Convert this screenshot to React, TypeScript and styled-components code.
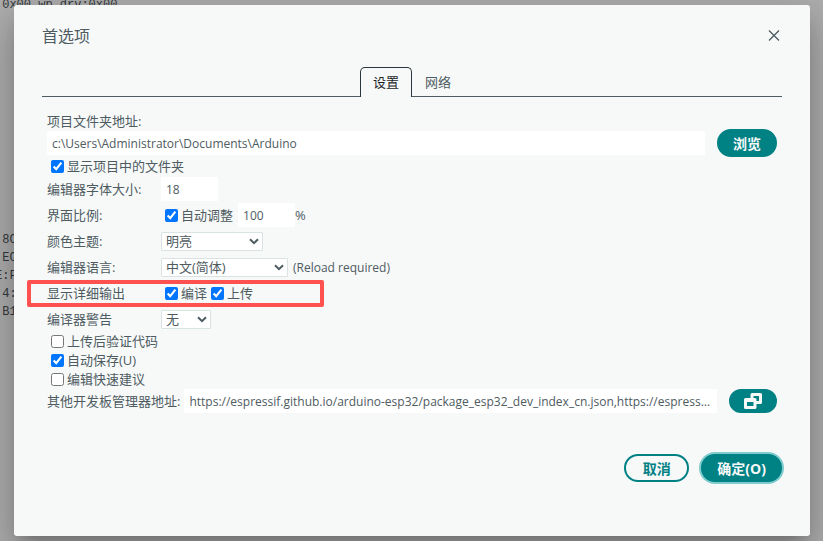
import React, { useState } from "react";
import styled, { createGlobalStyle } from "styled-components";

const teal = "#008184";
const ink = "#4e5b61";

const GlobalStyle = createGlobalStyle`
  *, *::before, *::after { box-sizing: border-box; }
  body {
    margin: 0;
    background: #aeaeae;
    color: ${ink};
    font-family: "Open Sans", "Noto Sans CJK SC", sans-serif;
    font-size: 13px;
    line-height: 19px;
  }
  button, input, select { font: inherit; color: inherit; margin: 0; }
`;

const Page = styled.div`
  position: relative;
  min-height: 100vh;
  padding: 5px 13px 5px 14px;
  overflow: hidden;
`;

const Console = styled.div`
  position: absolute;
  top: -4px;
  left: -5px;
  color: #34393c;
  font: 12px/18px "Liberation Mono", monospace;
  white-space: pre;
`;

const ConsoleBlock = styled.div`
  margin-top: 217px;
`;

const Dialog = styled.section`
  position: relative;
  padding: 20px 28px 54px;
  border-radius: 3px;
  background: #f7f9f9;
  box-shadow: 0 11px 15px -7px rgba(0, 0, 0, 0.2), 0 24px 38px 3px rgba(0, 0, 0, 0.14),
    0 9px 46px 8px rgba(0, 0, 0, 0.12);
`;

const Header = styled.header`
  display: flex;
  align-items: center;
  justify-content: space-between;
  height: 22px;
`;

const Title = styled.h1`
  margin: 0;
  font-size: 16px;
  font-weight: 400;
  line-height: 22px;
`;

const CloseButton = styled.button`
  display: flex;
  padding: 2px;
  border: 0;
  background: none;
`;

const Tabs = styled.div`
  display: flex;
  justify-content: center;
  margin-top: 20px;
  border-bottom: 1px solid ${ink};
`;

const Tab = styled.button<{ $active: boolean }>`
  height: 30px;
  margin-bottom: -1px;
  padding: 0 12px;
  border: 1px solid ${(p) => (p.$active ? "#2c353a" : "transparent")};
  border-bottom: 0;
  border-radius: 5px 5px 0 0;
  background: ${(p) => (p.$active ? "#f7f9f9" : "none")};
  color: ${(p) => (p.$active ? "#1c2326" : ink)};
`;

const Body = styled.div`
  padding: 15px 5px 0;
`;

const BlockLabel = styled.label`
  display: block;
  height: 17px;
`;

const Line = styled.div`
  display: flex;
  align-items: center;
  gap: 12px;
`;

const UrlField = styled.div`
  display: flex;
  flex: 1;
  align-items: center;
  gap: 4px;
  white-space: nowrap;
`;

const TextBox = styled.input<{ $small?: boolean }>`
  flex: ${(p) => (p.$small ? "none" : "1")};
  width: ${(p) => (p.$small ? "57px" : "auto")};
  min-width: 0;
  height: 24px;
  padding: 0 5px;
  border: 0;
  border-radius: 1px;
  background: #fff;
  font-size: 12px;
  text-overflow: ellipsis;
`;

const Settings = styled.div`
  display: grid;
  gap: 2px;
  margin: 1px 0;
`;

const Setting = styled.div`
  position: relative;
  display: grid;
  grid-template-columns: 114px 1fr;
  align-items: center;
  height: 24px;
`;

const Controls = styled.div`
  display: flex;
  align-items: center;
`;

const Highlight = styled.span`
  position: absolute;
  top: -1px;
  left: -20px;
  width: 297px;
  height: 27px;
  border: 4px solid #ff5150;
  border-radius: 2px;
  pointer-events: none;
`;

const CheckLabel = styled.label<{ $spaced?: boolean }>`
  display: flex;
  align-items: center;
  height: 19px;
  margin-right: ${(p) => (p.$spaced ? "5px" : "0")};

  input {
    width: 13px;
    height: 13px;
    margin: 0 3px 0 4px;
  }
`;

const SelectBox = styled.div<{ $size: "s" | "m" | "l" }>`
  position: relative;
  width: ${(p) => ({ s: 50, m: 102, l: 127 })[p.$size]}px;
  height: 19px;

  select {
    display: block;
    width: 100%;
    height: 19px;
    padding: 0 4px;
    appearance: none;
    border: 1px solid #dae3e3;
    border-radius: 1px;
    background: #fff;
    line-height: 16px;
  }

  svg {
    position: absolute;
    top: 6px;
    right: 4px;
    pointer-events: none;
  }
`;

const Note = styled.span`
  margin-left: 5px;
  font-size: 12px;
`;

const Button = styled.button<{ $outline?: boolean; $focus?: boolean; $slim?: boolean }>`
  display: flex;
  align-items: center;
  justify-content: center;
  min-width: ${(p) => (p.$outline ? "65px" : "0")};
  height: ${(p) => (p.$slim ? "24px" : "28px")};
  padding: 0 ${(p) => (p.$slim ? "13px" : "14px")};
  border: 2px solid ${teal};
  border-radius: 14px;
  background: ${(p) => (p.$outline ? "transparent" : teal)};
  box-shadow: ${(p) => (p.$focus ? "0 0 0 2px #7fcbcd" : "none")};
  color: ${(p) => (p.$outline ? teal : "#f7f9f9")};
  font-size: 14px;
  font-weight: 700;
  white-space: nowrap;
`;

const Footer = styled.footer`
  display: flex;
  justify-content: flex-end;
  gap: 12px;
  margin-top: 41px;
`;

function Check({ text, on = false, spaced }: { text: string; on?: boolean; spaced?: boolean }) {
  return (
    <CheckLabel $spaced={spaced}>
      <input type="checkbox" defaultChecked={on} />
      {text}
    </CheckLabel>
  );
}

function Select({ id, size, value }: { id: string; size: "s" | "m" | "l"; value: string }) {
  return (
    <SelectBox $size={size}>
      <select id={id}>
        <option>{value}</option>
      </select>
      <svg width="10" height="7" viewBox="0 0 10 7" fill="none" stroke={ink} strokeWidth="2">
        <path d="M1 1.2 5 5.2 9 1.2" />
      </svg>
    </SelectBox>
  );
}

export default function App() {
  const [tab, setTab] = useState("设置");
  return (
    <Page>
      <GlobalStyle />
      <Console aria-hidden="true">
        <div>{" 0x00,wp_drv:0x00"}</div>
        <ConsoleBlock>
          <div>{" 8C"}</div>
          <div>{" EC"}</div>
          <div>{"E:F"}</div>
          <div>{" 4:"}</div>
          <div>{" B1"}</div>
        </ConsoleBlock>
      </Console>
      <Dialog role="dialog" aria-labelledby="title">
        <Header>
          <Title id="title">首选项</Title>
          <CloseButton aria-label="关闭">
            <svg width="12" height="12" viewBox="0 0 12 12" stroke={ink} strokeWidth="1.3">
              <path d="M1 .5 11 10.5M11 .5 1 10.5" />
            </svg>
          </CloseButton>
        </Header>
        <Tabs role="tablist">
          {["设置", "网络"].map((name) => (
            <Tab
              key={name}
              role="tab"
              aria-selected={tab === name}
              $active={tab === name}
              onClick={() => setTab(name)}
            >
              {name}
            </Tab>
          ))}
        </Tabs>
        <Body>
          <BlockLabel htmlFor="folder">项目文件夹地址:</BlockLabel>
          <Line>
            <TextBox id="folder" defaultValue="c:\Users\Administrator\Documents\Arduino" />
            <Button>浏览</Button>
          </Line>
          <Check text="显示项目中的文件夹" on />
          <Settings>
            <Setting>
              <label htmlFor="size">编辑器字体大小:</label>
              <TextBox id="size" $small defaultValue="18" />
            </Setting>
            <Setting>
              <label htmlFor="scale">界面比例:</label>
              <Controls>
                <Check text="自动调整" on spaced />
                <TextBox id="scale" $small defaultValue="100" />%
              </Controls>
            </Setting>
            <Setting>
              <label htmlFor="theme">颜色主题:</label>
              <Select id="theme" size="m" value="明亮" />
            </Setting>
            <Setting>
              <label htmlFor="language">编辑器语言:</label>
              <Controls>
                <Select id="language" size="l" value="中文(简体)" />
                <Note>(Reload required)</Note>
              </Controls>
            </Setting>
            <Setting>
              <span>显示详细输出</span>
              <Controls>
                <Check text="编译" on />
                <Check text="上传" on />
              </Controls>
              <Highlight />
            </Setting>
            <Setting>
              <label htmlFor="warnings">编译器警告</label>
              <Select id="warnings" size="s" value="无" />
            </Setting>
          </Settings>
          <Check text="上传后验证代码" />
          <Check text="自动保存(U)" on />
          <Check text="编辑快速建议" />
          <Line>
            <UrlField>
              <label htmlFor="urls">其他开发板管理器地址:</label>
              <TextBox
                id="urls"
                defaultValue="https://espressif.github.io/arduino-esp32/package_esp32_dev_index_cn.json,https://espressif.github.io/arduino-esp32/package_esp32_index_cn.json"
              />
            </UrlField>
            <Button $slim aria-label="编辑地址">
              <svg width="18" height="16" viewBox="0 0 18 16" fill="#f7f9f9">
                <path
                  fillRule="evenodd"
                  d="M8 0h8.500a1.500 1.500 0 0 1 1.500 1.500v8a1.500 1.500 0 0 1-1.500 1.500H12.500v3.500a1.500 1.500 0 0 1-1.500 1.500H1.500A1.500 1.500 0 0 1 0 14.500v-8A1.500 1.500 0 0 1 1.500 5h5V1.500A1.500 1.500 0 0 1 8 0ZM9.500 3v2H11a1.500 1.500 0 0 1 1.500 1.500V8H15V3ZM3 9v4h6.500V9Z"
                />
              </svg>
            </Button>
          </Line>
        </Body>
        <Footer>
          <Button $outline>取消</Button>
          <Button $focus>确定(O)</Button>
        </Footer>
      </Dialog>
    </Page>
  );
}
